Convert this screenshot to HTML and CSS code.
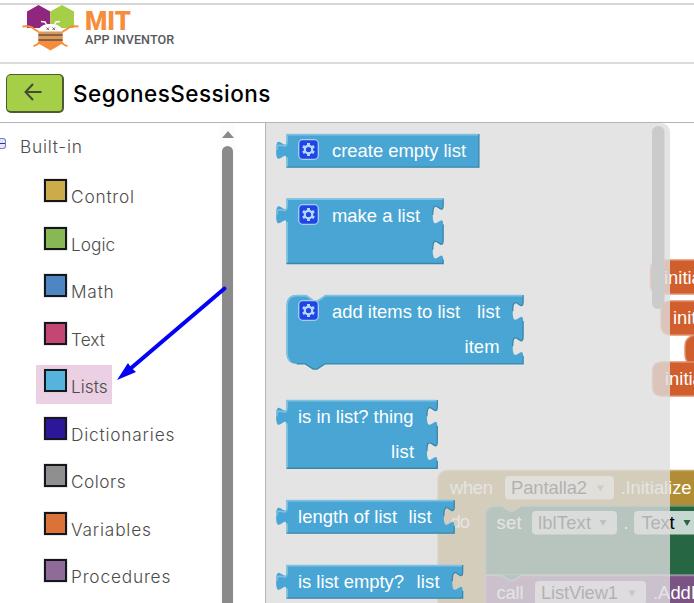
FILE: index.html
```html
<!DOCTYPE html>
<html lang="en">
<head>
<meta charset="utf-8">
<title>MIT App Inventor</title>
<link rel="stylesheet" href="styles.css">
</head>
<body>
<header class="topbar">
  <svg class="bee" width="60" height="50" viewBox="20 3 60 50">
    <path fill="#91267f" d="M38.500 5 50.300 11.500V25L45 31H30L27 27.500V11.500Z"/>
    <path fill="#a5cf47" d="M62 5 74 11.500V27L68 31H55L50.300 25V11.500Z"/>
    <path fill="#fff" d="M22 28H79V34H62L50 26 38 34H22Z"/>
    <path fill="none" stroke="#f68d3c" stroke-width="2" d="M22.500 26.500C28 26 31 26 34 29L39 32M78.500 26.500C73 26 70 26 67 29L62 32M33.500 46C37 45.500 39 43 40.500 41M67.500 46C64 45.500 62 43 60.500 41"/>
    <path fill="#f68d3c" d="M38.500 31H62.500V43.500L50.500 50.500 38.500 43.500Z"/>
    <path fill="#d9995c" d="M38.500 32H62.500V41H38.500Z"/>
    <path stroke="#6b4f3a" stroke-width="1.300" d="M38.500 35H62.500M38.500 40H62.500"/>
    <path fill="#fff" d="M38.500 31.500C39 26.500 43 24 50.500 24S62 26.500 62.500 31.500Z"/>
    <path fill="none" stroke="#fff" stroke-width="1.500" d="M41 21.500 45 22 47 25.500M60 21.500 56 22 54 25.500"/>
    <path stroke="#555" stroke-width=".9" d="M46.500 27.500l2.500 2.500m0-2.500l-2.500 2.500M52.500 27.500l2.500 2.500m0-2.500l-2.500 2.500"/>
  </svg>
  <div class="brand"><span class="mit">MIT</span><span class="sub">APP INVENTOR</span></div>
</header>
<div class="projectbar">
  <button class="back"><svg width="18" height="18" viewBox="0 0 18 18"><path d="M17.500 9H1.500M9 1 1.500 9 9 17"/></svg></button>
  <h1>SegonesSessions</h1>
</div>
<main class="editor">
  <nav class="palette">
    <div class="tree">
      <div class="root"><i class="toggle"></i><span>Built-in</span></div>
      <ul>
        <li><i class="sw control"></i><span class="wide">Control</span></li>
        <li><i class="sw logic"></i><span>Logic</span></li>
        <li><i class="sw math"></i><span class="wide">Math</span></li>
        <li><i class="sw text"></i><span>Text</span></li>
        <li class="selected"><i class="sw lists"></i><span>Lists</span></li>
        <li><i class="sw dict"></i><span class="wide">Dictionaries</span></li>
        <li><i class="sw colors"></i><span class="mid">Colors</span></li>
        <li><i class="sw vars"></i><span class="wide">Variables</span></li>
        <li><i class="sw procs"></i><span class="wide">Procedures</span></li>
      </ul>
    </div>
    <div class="scroll"><i class="up"></i><i class="thumb"></i></div>
  </nav>
  <svg class="workspace" width="428" height="480" viewBox="266 123 428 480">
    <defs>
      <g id="gear">
        <rect x="-9.800" y="-9.800" width="19.600" height="19.600" rx="4" fill="#1f45e6" stroke="#a9cdf5" stroke-width="1.300"/>
        <path d="M0-6.500V6.500M-5.600-3.250 5.600 3.250M-5.600 3.250 5.600-3.250" stroke="#b5d9fa" stroke-width="3"/>
        <circle r="3.700" fill="#1f45e6" stroke="#b5d9fa" stroke-width="2.200"/>
      </g>
    </defs>

    <g class="orange">
      <path d="M700 260H661Q650.500 260 650.500 270V284Q650.500 294 661 294H700Z"/>
      <path d="M700 335H694Q685 338 685 346V354Q685 361 691 366H700Z"/>
      <path d="M700 301H671Q661 301 661 311V325Q661 335 671 335H700Z"/>
      <path d="M700 362H662Q652.500 362 652.500 372V386Q652.500 396 662 396H700Z"/>
    </g>
    <g class="label">
      <text x="664" y="284">initialize</text>
      <text x="673" y="324">initialize</text>
      <text x="665" y="385">initialize</text>
    </g>

    <path fill="#b18e35" stroke="#c8ae70" stroke-width="1.500" d="M700 470.500H449Q438 470.500 438 481V610H700Z"/>
    <path fill="#266643" stroke="#6a9a80" stroke-width="1.500" d="M700 506H521L513.500 511H509.500L502 506H495Q485.500 506 485.500 516V575H700Z"/>
    <path fill="#7c5385" d="M700 575.500H485.500V610H700Z"/>
    <path fill="#266643" d="M502 575H521L513.500 580H509.500Z"/>
    <path fill="none" stroke="#a688ad" stroke-width="1.500" d="M700 575.500H521L513.500 580.500H509.500L502 575.500H485.500V610"/>
    <g class="field">
      <rect x="505" y="476" width="109" height="23.500" rx="4"/>
      <rect x="532" y="511" width="85" height="23.500" rx="4"/>
      <rect x="634" y="511" width="70" height="23.500" rx="4"/>
      <rect x="535" y="581" width="111" height="24" rx="4"/>
    </g>
    <g class="label">
      <text x="450" y="494" textLength="43">when</text>
      <text x="620.500" y="494" textLength="71">.Initialize</text>
      <text x="450.500" y="528" textLength="19.500">do</text>
      <text x="496.500" y="529" textLength="25">set</text>
      <text x="623.500" y="529">.</text>
      <text x="496.500" y="599" textLength="27">call</text>
      <text x="653" y="599">.AddItems</text>
    </g>
    <g class="value">
      <text x="511" y="494" textLength="76">Pantalla2</text>
      <text x="538" y="529" textLength="53">lblText</text>
      <text x="641.500" y="529" textLength="33">Text</text>
      <text x="541" y="599" textLength="77">ListView1</text>
    </g>
    <path fill="#b18e35" d="M597 485.500h7l-3.500 6Z"/>
    <path fill="#266643" d="M599.500 520h7l-3.500 6ZM683.500 520h7l-3.500 6Z"/>
    <path fill="#7c5385" d="M628.500 590.500h7l-3.500 6Z"/>

    <path class="flyout" d="M266 123H660Q670 123 670 133V603H266Z"/>
    <rect x="652" y="126" width="12.500" height="183" rx="6.200" fill="#cbcbcb"/>

    <g transform="translate(286.500 134) scale(1.3)">
      <path class="blk" d="M0 0H148V25.500H0V20c0-10-8 8-8-7.500s8 2.500 8-7.500Z"/>
      <path class="lo" d="M148 0V25.500H0"/>
      <path class="hi" d="M147.500 .5H.5V5c0 10-8-2-8 7.500M.5 18V25"/>
    </g>
    <g transform="translate(286.500 198.500) scale(1.3)">
      <path class="blk" d="M0 0H120.500V5c0 10-8-8-8 7.500s8-2.500 8 7.500V32c0 10-8-8-8 7.500s8-2.500 8 7.500V50H0V20c0-10-8 8-8-7.500s8 2.500 8-7.500Z"/>
      <path class="lo" d="M120.500 0V5c0 10-8-8-8 7.500M120.500 20V32c0 10-8-8-8 7.500M120.500 47V50H0"/>
      <path class="hi" d="M120 .5H.5V5c0 10-8-2-8 7.500M.5 18V49.500"/>
    </g>
    <g transform="translate(286.500 295) scale(1.3)">
      <path class="blk" d="M8 0H15l6 4h3l6-4H182V5c0 10-8-8-8 7.500s8-2.500 8 7.500V32c0 10-8-8-8 7.500s8-2.500 8 7.500V53H29.500l-6 4h-3l-6-4H8Q0 53 0 45V8Q0 0 8 0Z"/>
      <path class="lo" d="M182 0V5c0 10-8-8-8 7.500M182 20V32c0 10-8-8-8 7.500M182 47V53H29.500l-6 4h-3l-6-4H8"/>
      <path class="hi" d="M181.500 .5H30l-6 4h-3l-6-4H8Q.5 .5 .5 8V45Q.5 49 3 51"/>
    </g>
    <g transform="translate(286.500 400) scale(1.3)">
      <path class="blk" d="M0 0H116V5c0 10-8-8-8 7.500s8-2.500 8 7.500V32c0 10-8-8-8 7.500s8-2.500 8 7.500V52.500H0V20c0-10-8 8-8-7.500s8 2.500 8-7.500Z"/>
      <path class="lo" d="M116 0V5c0 10-8-8-8 7.500M116 20V32c0 10-8-8-8 7.500M116 47V52.500H0"/>
      <path class="hi" d="M115.500 .5H.5V5c0 10-8-2-8 7.500M.5 18V52"/>
    </g>
    <g transform="translate(286.500 500) scale(1.3)">
      <path class="blk" d="M0 0H129V5c0 10-8-8-8 7.500s8-2.500 8 7.500V25.500H0V20c0-10-8 8-8-7.500s8 2.500 8-7.500Z"/>
      <path class="lo" d="M129 0V5c0 10-8-8-8 7.500M129 20V25.500H0"/>
      <path class="hi" d="M128.500 .5H.5V5c0 10-8-2-8 7.500M.5 18V25"/>
    </g>
    <g transform="translate(286.500 565) scale(1.3)">
      <path class="blk" d="M0 0H135.500V5c0 10-8-8-8 7.500s8-2.500 8 7.500V25.500H0V20c0-10-8 8-8-7.500s8 2.500 8-7.500Z"/>
      <path class="lo" d="M135.500 0V5c0 10-8-8-8 7.500M135.500 20V25.500H0"/>
      <path class="hi" d="M135 .5H.5V5c0 10-8-2-8 7.500M.5 18V25"/>
    </g>
    <use href="#gear" x="308.500" y="149.500"/>
    <use href="#gear" x="308.500" y="214.500"/>
    <use href="#gear" x="308.500" y="310.500"/>
    <g class="label">
      <text x="332" y="157" textLength="134">create empty list</text>
      <text x="332" y="222" textLength="88">make a list</text>
      <text x="332" y="318" textLength="128">add items to list</text>
      <text x="477" y="318" textLength="23">list</text>
      <text x="464.500" y="353" textLength="35">item</text>
      <text x="298" y="423" textLength="115.500">is in list? thing</text>
      <text x="391" y="458" textLength="23">list</text>
      <text x="298" y="523" textLength="99">length of list</text>
      <text x="408.500" y="523" textLength="23">list</text>
      <text x="298" y="588" textLength="106">is list empty?</text>
      <text x="416.500" y="588" textLength="23">list</text>
    </g>
  </svg>
  <svg class="pointer" width="112" height="98" viewBox="116 285 112 98">
    <path fill="none" stroke="#0400f5" stroke-width="4" stroke-linecap="round" d="M224.500 288.500 130 369"/>
    <path fill="#0400f5" d="M117 380 128 363 131 367.500 136 372Z"/>
  </svg>
</main>
</body>
</html>
```

FILE: styles.css
```css
* { box-sizing: border-box; }
body {
  margin: 0;
  width: 694px;
  height: 603px;
  overflow: hidden;
  background: #fff;
  font-family: Inter, "Liberation Sans", sans-serif;
}
.topbar {
  display: flex;
  height: 64px;
  padding-left: 20px;
  border-bottom: 2px solid #dcdcdc;
  background: linear-gradient(#fff 3px, #d6d6d6 3px, #d6d6d6 5px, #fff 5px);
}
.bee { margin-top: 3px; }
.brand {
  display: flex;
  flex-direction: column;
  gap: 2px;
  padding: 6px 0 0 5px;
  font-family: Roboto, sans-serif;
}
.mit {
  font-size: 25.500px;
  line-height: 30px;
  height: 25px;
  font-weight: 900;
  color: #f68d3c;
}
.sub {
  font-size: 12.600px;
  line-height: 14px;
  font-weight: 500;
  color: #58595b;
  letter-spacing: .1px;
}
.projectbar {
  display: flex;
  align-items: center;
  height: 58px;
  padding: 0 0 0 6px;
  gap: 9px;
}
.back {
  display: grid;
  place-items: center;
  width: 58px;
  height: 39px;
  margin-top: 1px;
  padding: 0 4px 2px 0;
  border: 1px solid #4f5a30;
  border-right-width: 2px;
  border-bottom-width: 2px;
  border-radius: 5px;
  background: #a5cf47;
}
.back path { fill: none; stroke: #444b35; stroke-width: 2; }
h1 {
  margin: 0;
  font-size: 22.500px;
  font-weight: 500;
  letter-spacing: .45px;
  color: #000;
}
.editor {
  position: relative;
  display: flex;
  height: 481px;
  border-top: 1px solid #b4b4b4;
}
.palette {
  display: flex;
  justify-content: space-between;
  width: 266px;
  border-right: 1px solid #b4b4b4;
  color: #4c4c4c;
}
.tree { font-size: 17.300px; font-weight: 300; }
.root { display: flex; height: 50px; gap: 14px; }
.toggle {
  width: 6px;
  height: 11px;
  margin-top: 15px;
  border: 1px solid #7b7bc0;
  border-left: 0;
  border-radius: 0 3px 3px 0;
  background: linear-gradient(#e6e6fa 4px, #3333a0 4px, #3333a0 5px, #e6e6fa 5px);
}
.root span { padding-top: 13px; line-height: 22px; letter-spacing: .75px; }
ul {
  display: flex;
  flex-direction: column;
  align-items: flex-start;
  gap: 8.500px;
  margin: 2px 0 0 36px;
  padding: 0;
  list-style: none;
}
li { display: flex; height: 39px; padding: 4px 5px 0 8px; gap: 4px; }
li span { padding-top: 6px; line-height: 24px; }
li .wide { letter-spacing: .8px; }
li .mid { letter-spacing: .5px; }
.selected { width: 76px; background: #ead0e2; }
.sw {
  flex: none;
  width: 23px;
  height: 23px;
  border: 2px solid #15171c;
  box-shadow: 0 0 0 .5px #c5ccd5;
}
.control { background: #cdab4b; }
.logic { background: #88b854; }
.math { background: #4e86c3; }
.text { background: #c44672; }
.lists { background: #56b3dc; }
.dict { background: #2d1799; }
.colors { background: #8f8f8f; }
.vars { background: #db7339; }
.procs { background: #906a99; }
.scroll {
  display: flex;
  flex-direction: column;
  align-items: center;
  width: 15px;
  margin-right: 30px;
  padding-top: 8px;
  background: #fcfcfc;
}
.up {
  border: 6.500px solid transparent;
  border-top: 0;
  border-bottom: 7px solid #8a8a8a;
}
.thumb {
  width: 11px;
  flex: 1;
  margin-top: 8px;
  border-radius: 6px 6px 0 0;
  background: #8a8a8a;
}
.workspace { display: block; flex: none; }
.workspace text { font-family: "Liberation Sans", Arial, sans-serif; font-size: 18.400px; }
.label { fill: #fff; }
.value { fill: #000; }
.field { fill: #fff; fill-opacity: .75; }
.orange path { fill: #d05f2d; stroke: #df8f6c; stroke-width: 1.500; }
.flyout { fill: #ddd; fill-opacity: .8; }
.blk { fill: #49a6d4; }
.hi { fill: none; stroke: #80c1e1; stroke-width: 1.200; }
.lo { fill: none; stroke: #3a85aa; stroke-width: 1; }
.pointer { position: absolute; left: 116px; top: 162px; }
```
